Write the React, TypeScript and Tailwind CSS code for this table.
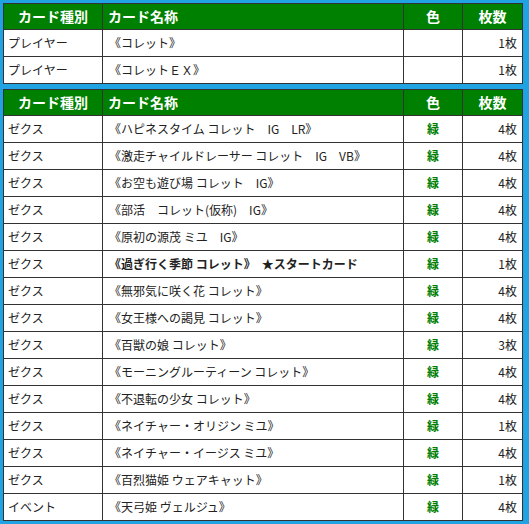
import React from 'react'

type Row = {
  kind: string
  name: string
  color?: string
  count: string
  bold?: boolean
}

const players: Row[] = [
  { kind: 'プレイヤー', name: '《コレット》', count: '1枚' },
  { kind: 'プレイヤー', name: '《コレットＥＸ》', count: '1枚' },
]

const cards: Row[] = [
  { kind: 'ゼクス', name: '《ハピネスタイム コレット　IG　LR》', color: '緑', count: '4枚' },
  { kind: 'ゼクス', name: '《激走チャイルドレーサー コレット　IG　VB》', color: '緑', count: '4枚' },
  { kind: 'ゼクス', name: '《お空も遊び場 コレット　IG》', color: '緑', count: '4枚' },
  { kind: 'ゼクス', name: '《部活　コレット(仮称)　IG》', color: '緑', count: '4枚' },
  { kind: 'ゼクス', name: '《原初の源茂 ミユ　IG》', color: '緑', count: '4枚' },
  { kind: 'ゼクス', name: '《過ぎ行く季節 コレット》　★スタートカード', color: '緑', count: '1枚', bold: true },
  { kind: 'ゼクス', name: '《無邪気に咲く花 コレット》', color: '緑', count: '4枚' },
  { kind: 'ゼクス', name: '《女王様への謁見 コレット》', color: '緑', count: '4枚' },
  { kind: 'ゼクス', name: '《百獣の娘 コレット》', color: '緑', count: '3枚' },
  { kind: 'ゼクス', name: '《モーニングルーティーン コレット》', color: '緑', count: '4枚' },
  { kind: 'ゼクス', name: '《不退転の少女 コレット》', color: '緑', count: '4枚' },
  { kind: 'ゼクス', name: '《ネイチャー・オリジン ミユ》', color: '緑', count: '1枚' },
  { kind: 'ゼクス', name: '《ネイチャー・イージス ミユ》', color: '緑', count: '4枚' },
  { kind: 'ゼクス', name: '《百烈猫姫 ウェアキャット》', color: '緑', count: '1枚' },
  { kind: 'イベント', name: '《天弓姫 ヴェルジュ》', color: '緑', count: '4枚' },
]

function DeckTable({ rows }: { rows: Row[] }) {
  return (
    <table className="w-[519px] table-fixed border-collapse border border-[#333]">
      <colgroup>
        <col className="w-[99px]" />
        <col className="w-[301px]" />
        <col className="w-[59px]" />
        <col className="w-[60px]" />
      </colgroup>
      <thead>
        <tr className="h-[26px] bg-[#008000] text-[14px] font-bold text-white">
          <th className="border border-[#333] px-1 text-center">カード種別</th>
          <th className="border border-[#333] px-[5px] text-left">カード名称</th>
          <th className="border border-[#333] text-center">色</th>
          <th className="border border-[#333] text-center">枚数</th>
        </tr>
      </thead>
      <tbody>
        {rows.map((r, i) => (
          <tr key={i} className="h-[27px] bg-white text-[12px] text-[#222]">
            <td className="border border-[#333] px-[4px] whitespace-nowrap">{r.kind}</td>
            <td className={`border border-[#333] px-[6px] whitespace-nowrap ${r.bold ? 'font-bold' : ''}`}>{r.name}</td>
            <td className="border border-[#333] text-center font-bold text-[#008000]">{r.color}</td>
            <td className="border border-[#333] px-[5px] text-right">{r.count}</td>
          </tr>
        ))}
      </tbody>
    </table>
  )
}

export default function App() {
  return (
    <div
      className="h-[524px] w-[529px] overflow-hidden bg-[#1fa3e3] pl-[3px] pt-[3px]"
      style={{ fontFamily: '"Noto Sans CJK JP", "Noto Sans", sans-serif' }}
    >
      <div className="flex flex-col gap-[5px]">
        <DeckTable rows={players} />
        <DeckTable rows={cards} />
      </div>
    </div>
  )
}
